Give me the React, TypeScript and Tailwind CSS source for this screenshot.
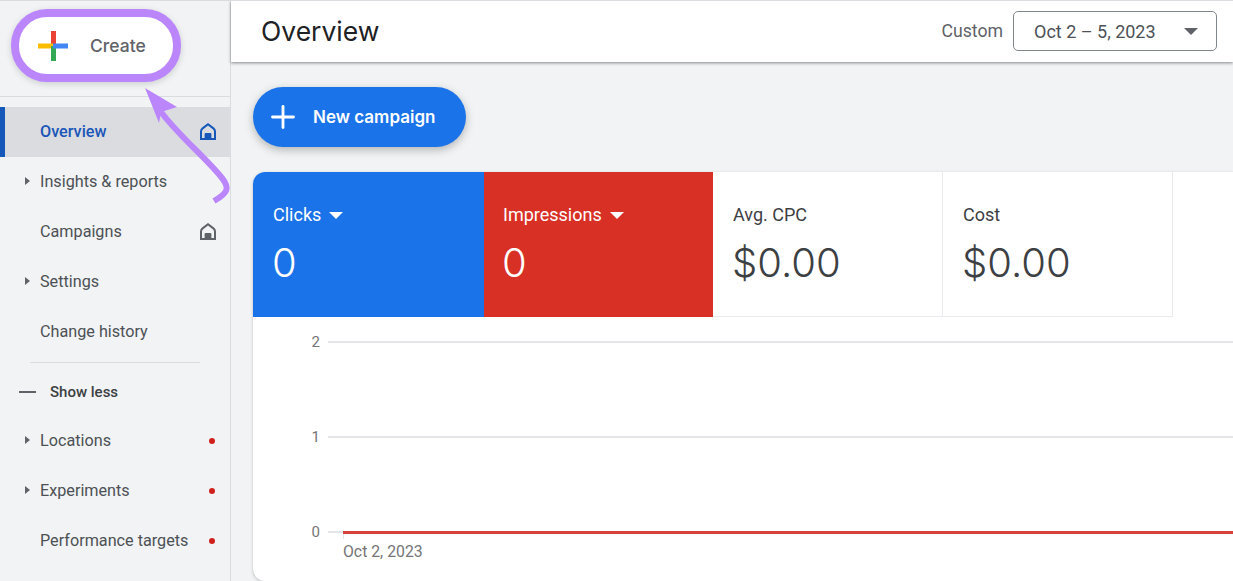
import { Plus } from "lucide-react";

const roboto = "font-['Roboto',sans-serif]";

function HomeIcon({ color }: { color: string }) {
  return (
    <svg width="16" height="17" viewBox="0 0 16 17" className="mb-[2px] shrink-0">
      <path
        d="M8 0 L14 4.6 Q16 6.2 16 8.4 V17 H0 V8.4 Q0 6.2 2 4.6 Z M8 2.6 L3.2 6.2 Q2 7.1 2 8.4 V15 H4.6 V11 Q4.6 10 5.6 10 H10.4 Q11.4 10 11.4 11 V15 H14 V8.4 Q14 7.1 12.8 6.2 Z"
        fill={color}
        fillRule="evenodd"
      />
    </svg>
  );
}

function Caret() {
  return <span className="absolute left-[25px] top-1/2 -mt-[5px] h-0 w-0 border-y-[4.5px] border-l-[5px] border-y-transparent border-l-[#5f6368]" />;
}

function NavRow({ label, caret, home, dot, active }: { label: string; caret?: boolean; home?: boolean; dot?: boolean; active?: boolean }) {
  return (
    <div className={`relative flex h-[50px] items-center justify-between pl-10 pr-[14px] text-[16.2px] ${active ? "border-l-[5px] border-[#1558b9] bg-[#dadce0] pl-[35px] font-medium text-[#1a56b8]" : "text-[#4d5156]"}`}>
      {caret && <Caret />}
      <span>{label}</span>
      {home && <HomeIcon color={active ? "#1558b9" : "#5f6368"} />}
      {dot && <span className="mr-[1px] h-[6px] w-[6px] rounded-full bg-[#d0201c]" />}
    </div>
  );
}

function Tile({ label, value, tone }: { label: string; value: string; tone: "blue" | "red" | "plain" }) {
  const bg =
    tone === "blue"
      ? "w-[231px] pl-5 bg-[#1a73e8] text-white"
      : tone === "red"
        ? "w-[229px] pl-[19px] bg-[#d93025] text-white"
        : "w-[230px] pl-5 bg-white text-[#3c4043] border-r border-b border-[#e8eaed]";
  return (
    <div className={`flex h-[145px] flex-col pt-[31px] ${bg}`}>
      <div className="flex h-[24px] items-center gap-2 text-[18px] leading-6">
        <span>{label}</span>
        {tone !== "plain" && <span className="h-0 w-0 border-x-[7px] border-t-[7px] border-x-transparent border-t-white" />}
      </div>
      <div className="mt-[12px] -ml-px font-['Inter',sans-serif] text-[40px] font-light leading-[48px]">{value}</div>
    </div>
  );
}

function GridRow({ label, red }: { label: string; red?: boolean }) {
  return (
    <div className="flex h-[20px] items-center">
      <span className="w-[68px] pr-[1px] text-right text-[15px] text-[#757575]">{label}</span>
      <div className="relative ml-[7px] h-[2px] flex-1 bg-[#e3e5e8]">
        {red && (
          <>
            <div className="absolute left-[15px] right-0 top-0 h-[3px] bg-[#d6413b]" />
            <div className="absolute left-[15px] top-[3px] h-[5px] w-px bg-[#e3e5e8]" />
          </>
        )}
      </div>
    </div>
  );
}

export default function App() {
  return (
    <div className={`relative flex h-[581px] w-[1233px] overflow-hidden border-t border-[#dadce0] bg-[#f1f3f4] ${roboto}`}>
      <aside className="flex w-[231px] shrink-0 flex-col border-r border-[#dadce0] bg-[#f1f3f4]">
        <div className="h-[96px] border-b border-[#dadce0] pl-[11px] pt-2">
          <div className="flex h-[73px] w-[170px] items-center rounded-[36px] border-[8px] border-[#bb86fc] bg-white shadow-[0_2px_6px_rgba(60,64,67,0.2)]">
            <svg width="32" height="32" viewBox="0 0 32 32" className="ml-[18px] shrink-0">
              <rect x="14" y="1" width="5" height="15" fill="#ea4335" />
              <rect x="1" y="13.5" width="15" height="5" fill="#fbbc04" />
              <rect x="14" y="16" width="5" height="15" fill="#34a853" />
              <rect x="16" y="13.5" width="15" height="5" fill="#4285f4" />
            </svg>
            <span className="ml-[21px] mt-px font-['Inter',sans-serif] text-[17.5px] font-medium text-[#5f6368]">Create</span>
          </div>
        </div>
        <nav className="mt-[10px] flex flex-col">
          <NavRow label="Overview" home active />
          <NavRow label="Insights & reports" caret />
          <NavRow label="Campaigns" home />
          <NavRow label="Settings" caret />
          <NavRow label="Change history" />
        </nav>
        <div className="ml-[30px] mt-[5px] h-px w-[170px] bg-[#dadce0]" />
        <div className="flex h-[58px] items-center pl-[19px] text-[15px] font-medium text-[#3c4043]">
          <span className="h-[2px] w-[17px] bg-[#5f6368]" />
          <span className="ml-[14px]">Show less</span>
        </div>
        <div className="-mt-[5px] flex flex-col">
          <NavRow label="Locations" caret dot />
          <NavRow label="Experiments" caret dot />
          <NavRow label="Performance targets" dot />
        </div>
      </aside>

      <main className="flex min-w-0 flex-1 flex-col">
        <header className="flex h-[61px] shrink-0 items-center justify-between bg-white pl-[30px] pr-4 shadow-[0_1px_3px_rgba(60,64,67,0.6)]">
          <h1 className="font-['Inter',sans-serif] text-[26.5px] font-normal text-[#202124]">Overview</h1>
          <div className="flex items-center gap-[10px]">
            <span className="text-[17.7px] text-[#5f6368]">Custom</span>
            <div className="-mt-[1px] flex h-[40px] w-[204px] items-center justify-between rounded-[5px] border border-[#80868b] pl-5 pr-[18px] text-[18px] text-[#4d5156]">
              <span>Oct 2 – 5, 2023</span>
              <span className="h-0 w-0 border-x-[7px] border-t-[7px] border-x-transparent border-t-[#5f6368]" />
            </div>
          </div>
        </header>

        <div className="flex flex-1 flex-col pl-[22px] pt-[25px]">
          <button className="flex h-[60px] w-[213px] items-center rounded-[30px] bg-[#1a73e8] pl-3 text-white shadow-[0_3px_8px_rgba(60,64,67,0.35)]">
            <Plus size={36} strokeWidth={1.9} />
            <span className="ml-3 mt-px font-['Inter',sans-serif] text-[17px] font-semibold">New campaign</span>
          </button>

          <section className="mt-[25px] flex-1 overflow-hidden rounded-l-[12px] bg-white shadow-[0_1px_3px_rgba(60,64,67,0.3)]">
            <div className="flex">
              <Tile label="Clicks" value="0" tone="blue" />
              <Tile label="Impressions" value="0" tone="red" />
              <Tile label="Avg. CPC" value="$0.00" tone="plain" />
              <Tile label="Cost" value="$0.00" tone="plain" />
            </div>
            <div className="flex flex-col gap-[75px] pt-[15px]">
              <GridRow label="2" />
              <GridRow label="1" />
              <GridRow label="0" red />
            </div>
            <div className="pl-[90px] text-[15.8px] leading-5 text-[#757575]">Oct 2, 2023</div>
          </section>
        </div>
      </main>

      <svg className="pointer-events-none absolute left-[140px] top-[84px]" width="95" height="122" viewBox="0 0 95 122" fill="none">
        <path d="M21 27 C40 52 65 72 82 93 C90 103 88 108 74 116" stroke="#bb86fc" strokeWidth="6" />
        <path d="M5 3 L37 22 L21 27 L19 38 Z" fill="#bb86fc" />
      </svg>
    </div>
  );
}
